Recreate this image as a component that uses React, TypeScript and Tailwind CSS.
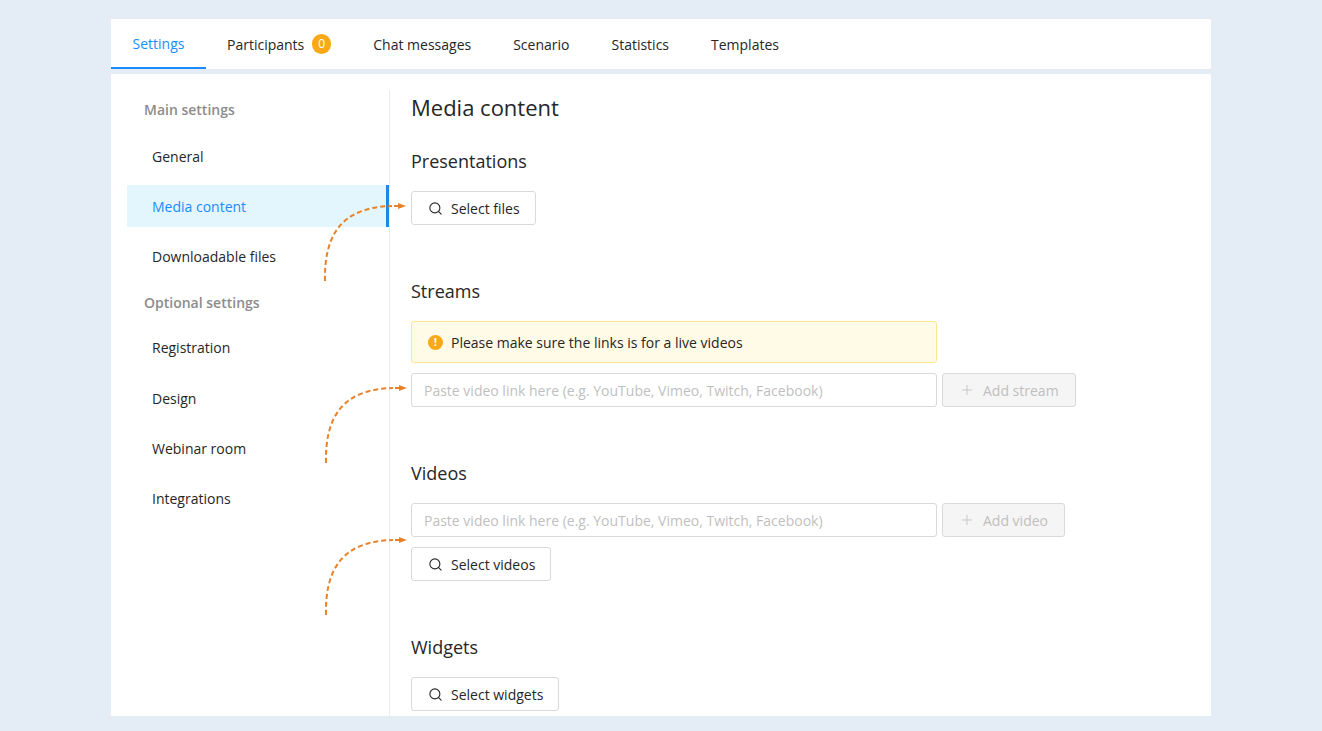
import { Search, Plus } from 'lucide-react'

const tabs = ['Chat messages', 'Scenario', 'Statistics', 'Templates']

const SideItem = ({ label, active }: { label: string; active?: boolean }) => (
  <div
    className={
      active
        ? 'flex h-[42px] items-center border-r-[3px] border-[#1e88e5] bg-[#e3f5fd] pl-[25px] text-[#1a8cff]'
        : 'flex h-[42px] items-center pl-[25px] text-[#262626]'
    }
  >
    {label}
  </div>
)

const SelectButton = ({ label }: { label: string }) => (
  <button className="flex h-[34px] items-center rounded-[3px] border border-[#d9d9d9] bg-white pl-4 pr-[15px] text-[#262626]">
    <Search size={15} strokeWidth={1.75} className="mr-[8px]" />
    {label}
  </button>
)

const AddButton = ({ label }: { label: string }) => (
  <button className="ml-[5px] flex h-[34px] items-center rounded-[3px] border border-[#d9d9d9] bg-[#f5f5f5] pl-4 pr-4 text-[#bfbfbf]">
    <Plus size={16} strokeWidth={1.25} className="mr-[8px]" />
    {label}
  </button>
)

const LinkInput = () => (
  <div className="flex h-[34px] w-[526px] items-center rounded-[3px] border border-[#d9d9d9] bg-white pl-3 text-[#bfbfbf]">
    Paste video link here (e.g. YouTube, Vimeo, Twitch, Facebook)
  </div>
)

const Arrow = ({ className }: { className: string }) => (
  <svg width="86" height="80" viewBox="0 0 86 80" fill="none" className={`absolute ${className}`}>
    <path d="M3 78C2 34 18 4 70 3" stroke="#e8822a" strokeWidth="2" strokeDasharray="5 3" />
    <path d="M72 3H76" stroke="#e8822a" strokeWidth="2" />
    <path d="M76 0L84 3L76 6Z" fill="#e8822a" />
  </svg>
)

export default function App() {
  return (
    <div className="h-[731px] overflow-hidden bg-[#e4ecf6] pt-[19px] font-['Open_Sans','Noto_Sans',sans-serif] text-[14px]">
      <div className="mx-auto w-[1100px]">
        {/* Tabs */}
        <div className="flex h-[50px] bg-white text-[#262626]">
          <div className="flex w-[95px] items-center justify-center border-b-2 border-[#1a8cff] text-[#1a8cff]">Settings</div>
          <div className="ml-[21px] flex items-center">
            Participants
            <span className="ml-2 flex h-5 w-[19px] items-center justify-center rounded-full bg-[#faa916] text-[12px] text-white">0</span>
          </div>
          {tabs.map((tab) => (
            <div key={tab} className="ml-[42px] flex items-center">
              {tab}
            </div>
          ))}
        </div>

        <div className="relative mt-[5px] flex h-[642px] overflow-hidden bg-white pl-4 pt-4">
          {/* Sidebar */}
          <div className="w-[263px] border-r border-[#ebebeb]">
            <div className="flex h-[45px] items-start pl-[17px] pt-[9px] font-semibold text-[#8c8c8c]">Main settings</div>
            <div className="flex flex-col gap-[8.4px]">
              <SideItem label="General" />
              <SideItem label="Media content" active />
              <SideItem label="Downloadable files" />
            </div>
            <div className="flex h-[49px] items-center pl-[17px] font-semibold text-[#8c8c8c]">Optional settings</div>
            <div className="flex flex-col gap-[8.4px]">
              <SideItem label="Registration" />
              <SideItem label="Design" />
              <SideItem label="Webinar room" />
              <SideItem label="Integrations" />
            </div>
          </div>

          {/* Main */}
          <div className="pl-[21px] text-[#262626]">
            <h1 className="flex h-[34px] items-center text-[22px]">Media content</h1>
            <h2 className="mt-[23px] flex h-7 items-center text-[18px]">Presentations</h2>
            <div className="mt-[16px] flex">
              <SelectButton label="Select files" />
            </div>

            <h2 className="mt-[52px] flex h-7 items-center text-[18px]">Streams</h2>
            <div className="mt-[16px] flex h-[42px] w-[526px] items-center rounded-[3px] border border-[#ffe58f] bg-[#fffbe6] pl-4">
              <span className="mr-[8px] flex h-[15px] w-[15px] items-center justify-center rounded-full bg-[#faa916] text-[10px] font-bold text-white">!</span>
              Please make sure the links is for a live videos
            </div>
            <div className="mt-[10px] flex">
              <LinkInput />
              <AddButton label="Add stream" />
            </div>

            <h2 className="mt-[52px] flex h-7 items-center text-[18px]">Videos</h2>
            <div className="mt-[16px] flex">
              <LinkInput />
              <AddButton label="Add video" />
            </div>
            <div className="mt-[10px] flex">
              <SelectButton label="Select videos" />
            </div>

            <h2 className="mt-[52px] flex h-7 items-center text-[18px]">Widgets</h2>
            <div className="mt-[16px] flex">
              <SelectButton label="Select widgets" />
            </div>
          </div>

          <Arrow className="left-[211px] top-[129px]" />
          <Arrow className="left-[212px] top-[311px]" />
          <Arrow className="left-[212px] top-[463px]" />
        </div>
      </div>
    </div>
  )
}
